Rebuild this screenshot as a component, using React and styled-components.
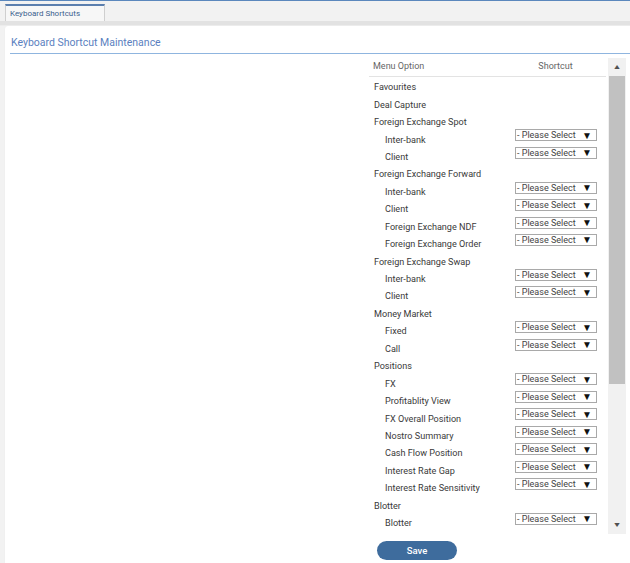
import React from "react"
import styled, { createGlobalStyle } from "styled-components"

const rows = [
  { label: "Favourites" },
  { label: "Deal Capture" },
  { label: "Foreign Exchange Spot" },
  { label: "Inter-bank", child: true },
  { label: "Client", child: true },
  { label: "Foreign Exchange Forward" },
  { label: "Inter-bank", child: true },
  { label: "Client", child: true },
  { label: "Foreign Exchange NDF", child: true },
  { label: "Foreign Exchange Order", child: true },
  { label: "Foreign Exchange Swap" },
  { label: "Inter-bank", child: true },
  { label: "Client", child: true },
  { label: "Money Market" },
  { label: "Fixed", child: true },
  { label: "Call", child: true },
  { label: "Positions" },
  { label: "FX", child: true },
  { label: "Profitablity View", child: true },
  { label: "FX Overall Position", child: true },
  { label: "Nostro Summary", child: true },
  { label: "Cash Flow Position", child: true },
  { label: "Interest Rate Gap", child: true },
  { label: "Interest Rate Sensitivity", child: true },
  { label: "Blotter" },
  { label: "Blotter", child: true }
]

const App = () => (
  <>
    <GlobalStyle />
    <Page>
      <TabBar>
        <Tab>Keyboard Shortcuts</Tab>
      </TabBar>
      <Panel>
        <Title>Keyboard Shortcut Maintenance</Title>
        <Body>
          <TableBox>
            <ScrollArea>
              <Header>
                <HeadCell>Menu Option</HeadCell>
                <HeadCell center>Shortcut</HeadCell>
              </Header>
              {rows.map((row, i) => (
                <Row key={i}>
                  <Label child={row.child}>{row.label}</Label>
                  {row.child && (
                    <Select>
                      <span>- Please Select</span>
                      <Arrow>▼</Arrow>
                    </Select>
                  )}
                </Row>
              ))}
            </ScrollArea>
            <Scrollbar>
              <ScrollButton>▲</ScrollButton>
              <Track>
                <Thumb />
              </Track>
              <ScrollButton>▼</ScrollButton>
            </Scrollbar>
          </TableBox>
        </Body>
        <Footer>
          <SaveButton>Save</SaveButton>
        </Footer>
      </Panel>
    </Page>
  </>
)

const GlobalStyle = createGlobalStyle`
  html, body {
    margin: 0;
    padding: 0;
    background: #fff;
    font-family: Roboto, "Liberation Sans", sans-serif;
  }
`

const Page = styled.div`
  width: 630px;
  height: 563px;
  overflow: hidden;
  background: #f2f2f2;
  border-top: 1px solid #5b88bd;
  box-sizing: border-box;
`

const TabBar = styled.div`
  height: 20px;
  padding-left: 5px;
  display: flex;
  align-items: flex-end;
  border-bottom: 4px solid #e2e2e2;
  box-shadow: 0 1px 0 #ececec;
`

const Tab = styled.div`
  width: 100px;
  height: 17px;
  box-sizing: border-box;
  background: #f7f7f7;
  border: 1px solid #cfcfcf;
  border-top: 2px solid #5b7fae;
  border-bottom: none;
  font-size: 8px;
  color: #3b5f8e;
  padding: 3px 0 0 4px;
`

const Panel = styled.div`
  margin: 1px 0 0 4px;
  height: 538px;
  background: #fff;
  border-top-left-radius: 4px;
  border-left: 1px solid #f0f0f0;
  display: flex;
  flex-direction: column;
`

const Title = styled.div`
  margin: 10px 0 0 5px;
  padding: 0 0 3px 1px;
  line-height: 14px;
  border-bottom: 1px solid #8fb5df;
  font-size: 10.5px;
  color: #5b7fc0;
`

const Body = styled.div`
  display: flex;
  justify-content: flex-end;
  padding: 4px 4px 0 0;
`

const TableBox = styled.div`
  display: flex;
  height: 476px;
`

const ScrollArea = styled.div`
  width: 239px;
  overflow: hidden;
`

const Header = styled.div`
  display: flex;
  justify-content: space-between;
  height: 19px;
  box-sizing: border-box;
  align-items: center;
  margin-right: 2px;
  padding: 0 0 3px 4px;
  border-bottom: 1px solid #e3e3e3;
`

const HeadCell = styled.div`
  font-size: 9px;
  color: #666;
  width: ${props => (props.center ? "83px" : "auto")};
  text-align: ${props => (props.center ? "center" : "left")};
  margin-right: ${props => (props.center ? "9px" : "0")};
`

const Row = styled.div`
  display: flex;
  align-items: center;
  justify-content: space-between;
  height: 17.45px;
  padding-right: 11px;
`

const Label = styled.div`
  font-size: 9.1px;
  color: #3a3a3a;
  padding-left: ${props => (props.child ? "16px" : "5px")};
  padding-top: 3px;
`

const Select = styled.div`
  align-self: flex-start;
  width: 82px;
  height: 12px;
  box-sizing: border-box;
  border: 1px solid #a9a9a9;
  display: flex;
  align-items: center;
  justify-content: space-between;
  padding: 0 4px 0 1px;
  font-size: 9px;
  color: #444;
  background: #fff;
`

const Arrow = styled.span`
  font-size: 10px;
  color: #111;
`

const Scrollbar = styled.div`
  width: 18px;
  display: flex;
  flex-direction: column;
  background: #f1f1f1;
`

const ScrollButton = styled.div`
  height: 18px;
  display: flex;
  align-items: center;
  justify-content: center;
  font-size: 7px;
  color: #505050;
  transform: scaleX(1.3);
`

const Track = styled.div`
  flex: 1;
  padding: 0 1px;
`

const Thumb = styled.div`
  height: 308px;
  background: #c1c1c1;
`

const Footer = styled.div`
  display: flex;
  padding: 7px 0 0 372px;
`

const SaveButton = styled.button`
  width: 80px;
  height: 19px;
  border: none;
  border-radius: 10px;
  background: #3e6c9d;
  color: #fff;
  font-family: Roboto, "Liberation Sans", sans-serif;
  font-size: 9.5px;
  font-weight: 500;
  cursor: pointer;
`

export default App
